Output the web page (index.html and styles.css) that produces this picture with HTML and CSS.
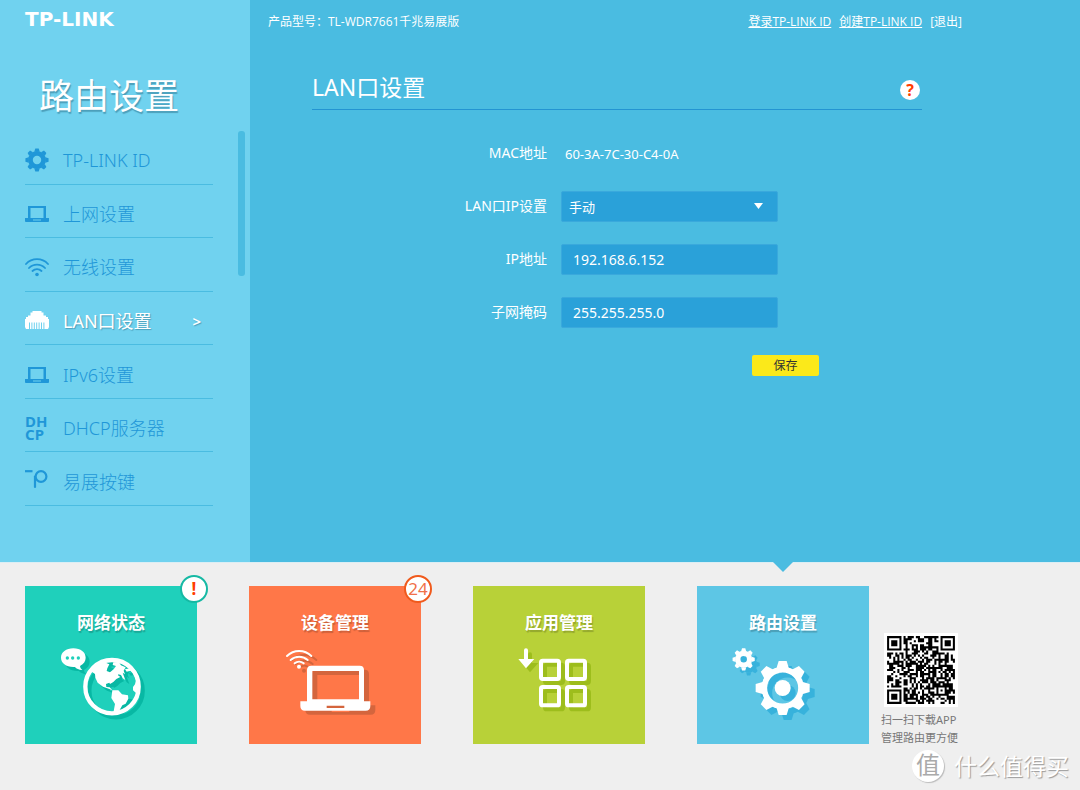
FILE: index.html
```html
<!DOCTYPE html>
<html lang="zh-CN">
<head>
<meta charset="utf-8">
<meta name="viewport" content="width=device-width, initial-scale=1">
<title>路由设置 - LAN口设置</title>
<link rel="stylesheet" href="styles.css">
</head>
<body>
<svg class="defs" aria-hidden="true">
  <defs>
    <g id="gear-teeth">
      <path id="tooth" d="M-12 -81H12L19 -58H-19Z"/>
      <use href="#tooth" transform="rotate(45)"/>
      <use href="#tooth" transform="rotate(90)"/>
      <use href="#tooth" transform="rotate(135)"/>
      <use href="#tooth" transform="rotate(180)"/>
      <use href="#tooth" transform="rotate(225)"/>
      <use href="#tooth" transform="rotate(270)"/>
      <use href="#tooth" transform="rotate(315)"/>
    </g>
    <g id="laptop">
      <path fill-rule="evenodd" d="M3 4H21V16H24V19C24 19.500 23.500 20 23 20H1C.500 20 0 19.500 0 19V16H3ZM5.500 6V16H18.500V6ZM8 17.500V18.500H16V17.500Z"/>
    </g>
  </defs>
</svg>

<div class="panel">
  <aside class="sidebar">
    <div class="logo">TP-LINK</div>
    <h1 class="sidebar-title">路由设置</h1>
    <div class="menu">
      <nav class="menu-list">
        <a class="menu-item" href="#id">
          <svg class="menu-icon" viewBox="-84 -84 168 168"><use href="#gear-teeth"/><circle r="46" fill="none" stroke="currentColor" stroke-width="33"/></svg>
          <span>TP-LINK ID</span>
        </a>
        <a class="menu-item" href="#wan">
          <svg class="menu-icon" viewBox="0 0 24 24"><use href="#laptop"/></svg>
          <span>上网设置</span>
        </a>
        <a class="menu-item" href="#wifi">
          <svg class="menu-icon" viewBox="0 0 24 24"><circle cx="12" cy="19.500" r="1.800"/><g fill="none" stroke="currentColor" stroke-width="1.800" stroke-linecap="round"><path d="M1 9A15 15 0 0 1 23 9M4 13A11 11 0 0 1 20 13M7.500 16A6.500 6.500 0 0 1 16.500 16"/></g></svg>
          <span>无线设置</span>
        </a>
        <a class="menu-item active" href="#lan">
          <svg class="menu-icon" viewBox="0 0 24 24"><path d="M7.500 2H16.500V3.500H18.500V6.500H21V8H23V10H24V18L23 20H1L0 18V10H1V8H3V6.500H5.500V3.500H7.500Z"/><path d="M4.500 13.500V20M6.900 13.500V20M9.300 13.500V20M11.700 13.500V20M14.100 13.500V20M16.500 13.500V20M18.900 13.500V20" stroke="#70d2ef" stroke-width="1"/></svg>
          <span>LAN口设置</span>
          <span class="menu-arrow">&gt;</span>
        </a>
        <a class="menu-item" href="#ipv6">
          <svg class="menu-icon" viewBox="0 0 24 24"><use href="#laptop"/></svg>
          <span>IPv6设置</span>
        </a>
        <a class="menu-item" href="#dhcp">
          <span class="menu-icon dhcp-icon">DH<br>CP</span>
          <span>DHCP服务器</span>
        </a>
        <a class="menu-item" href="#key">
          <svg class="menu-icon" viewBox="0 0 24 24"><g fill="none" stroke="currentColor" stroke-width="2.200"><path d="M0 1.200H7.500"/><path d="M10 17V6.500" stroke-linecap="round"/><circle cx="16" cy="6.500" r="5.400"/></g></svg>
          <span>易展按键</span>
        </a>
      </nav>
      <div class="scroll-thumb"></div>
    </div>
  </aside>

  <main class="content">
    <header class="topbar">
      <span>产品型号：TL-WDR7661千兆易展版</span>
      <div class="account">
        <a href="#login">登录TP-LINK ID</a>
        <a href="#register">创建TP-LINK ID</a>
        <a class="logout" href="#logout">[退出]</a>
      </div>
    </header>
    <section class="settings">
      <div class="settings-head">
        <h2>LAN口设置</h2>
        <button class="help" type="button" aria-label="帮助">?</button>
      </div>
      <form class="form">
        <span class="label">MAC地址</span>
        <span class="value">60-3A-7C-30-C4-0A</span>
        <label class="label" for="mode">LAN口IP设置</label>
        <div class="select">
          <select class="field" id="mode"><option>手动</option><option>自动</option></select>
          <svg class="caret" viewBox="0 0 9 6"><path d="M0 0H9L4.500 6Z"/></svg>
        </div>
        <label class="label" for="ip">IP地址</label>
        <input class="field" id="ip" type="text" value="192.168.6.152">
        <label class="label" for="mask">子网掩码</label>
        <input class="field" id="mask" type="text" value="255.255.255.0">
        <button class="save" type="button">保存</button>
      </form>
    </section>
  </main>
</div>

<footer class="dock">
  <a class="tile status" href="#status">
    <span class="tile-title">网络状态</span>
    <svg class="tile-icon" viewBox="0 0 172 90"><g transform="translate(-15 -70) scale(.33333)">
      <path d="M190 235C212 235 227 247 227 263C227 274 221 282 211 287Q208 293 217 300Q201 299 195 291C170 293 153 280 153 263C153 247 168 235 190 235Z"/>
      <g class="cutout"><circle cx="172" cy="264" r="5"/><circle cx="188" cy="264" r="5"/><circle cx="205" cy="264" r="5"/></g>
      <circle cx="306" cy="350" r="80" fill="none" stroke="currentColor" stroke-width="13"/>
      <path d="M243 304L264 284L284 277L298 283L292 295L290 303L300 307L311 298L318 288L308 285L310 277L326 276L333 286L347 292L341 302L345 313L338 308L346 330L338 325L333 315L325 313L324 316L331 321L319 327L310 336L300 342L298 338L288 342L289 351L299 352L307 361L298 357L279 350L263 338L256 323L255 312Z"/>
      <path d="M307 361L325 361L336 373L354 376L355 386L347 401L337 406L329 420L318 430L311 424L315 402L304 384Z"/>
      <path d="M345 298L359 295L366 303L378 318L384 337V370L378 369L369 361V351L375 343L378 330L370 310L362 302L350 305Z"/>
    </g></svg>
    <span class="badge alert">!</span>
  </a>
  <a class="tile devices" href="#devices">
    <span class="tile-title">设备管理</span>
    <svg class="tile-icon" viewBox="0 0 172 90"><g transform="translate(-9 -70) scale(.33333)">
      <circle cx="177" cy="290" r="6"/>
      <path d="M141 258A52 52 0 0 1 214 258M152 270A38 38 0 0 1 203 270M164 280A21 21 0 0 1 191 280" fill="none" stroke="currentColor" stroke-width="6" stroke-linecap="round"/>
      <path fill-rule="evenodd" d="M214 287H359Q372 287 372 300V394H391V408Q391 422 377 422H195Q181 422 181 408V394H201V300Q201 287 214 287ZM217 303V388H357V303ZM260 407V414H313V407Z"/>
    </g></svg>
    <span class="badge count">24</span>
  </a>
  <a class="tile apps" href="#apps">
    <span class="tile-title">应用管理</span>
    <svg class="tile-icon" viewBox="0 0 172 90"><g transform="translate(-13 -70) scale(.33333)">
      <path d="M192 241Q192 235 198 235Q204 235 204 241V267H223L198 295L175 267H192Z"/>
      <g fill="none" stroke="currentColor" stroke-width="12"><rect x="243" y="272" width="54" height="55" rx="5"/><rect x="321" y="272" width="54" height="55" rx="5"/><rect x="243" y="351" width="54" height="55" rx="5"/><rect x="321" y="351" width="54" height="55" rx="5"/></g>
    </g></svg>
  </a>
  <a class="tile router" href="#router">
    <span class="tile-title">路由设置</span>
    <svg class="tile-icon" viewBox="0 0 172 90"><g transform="translate(-17 -85) scale(.33333)">
      <g transform="translate(308 399)"><use href="#gear-teeth"/><circle r="55" fill="none" stroke="currentColor" stroke-width="17"/><circle r="24"/></g>
      <g transform="translate(191 313) scale(.41)"><use href="#gear-teeth"/><circle r="43" fill="none" stroke="currentColor" stroke-width="38"/></g>
    </g></svg>
  </a>
  <div class="download">
    <svg class="qr" id="qr" viewBox="-1.500 -1.500 36 36" role="img" aria-label="APP下载二维码"></svg>
    <p>扫一扫下载APP<br>管理路由更方便</p>
  </div>
  <div class="watermark"><span class="watermark-mark">值</span><span>什么值得买</span></div>
</footer>
<script src="qr.js"></script>
</body>
</html>
```
FILE: styles.css
```css
* {
  box-sizing: border-box;
}

body {
  margin: 0;
  min-height: 100vh;
  display: flex;
  flex-direction: column;
  background: #efefef;
  color: #fff;
  font-family: "Noto Sans", "Noto Sans CJK SC", sans-serif;
  font-size: 13px;
}

a {
  color: inherit;
  text-decoration: none;
}

h1,
h2,
p {
  margin: 0;
  font-weight: 400;
}

svg {
  display: block;
  fill: currentColor;
}

.defs {
  position: absolute;
  width: 0;
  height: 0;
}

.panel {
  display: flex;
  background: #4abce1;
}

.sidebar {
  flex: 0 0 250px;
  padding: 9px 5px 56px 25px;
  background: #70d2ef;
}

.logo {
  font: 700 20px/20px "DejaVu Sans", sans-serif;
}

.sidebar-title {
  padding: 42px 0 10px 14px;
  font-size: 35px;
  line-height: 50px;
  text-shadow: 1px 2px 1px #4c9fba;
}

.menu {
  display: flex;
  justify-content: space-between;
}

.menu-list {
  display: grid;
  grid-auto-rows: 1fr;
  width: 188px;
  height: 375px;
}

.menu-item {
  display: flex;
  align-items: center;
  gap: 14px;
  padding-top: 6px;
  border-bottom: 1px solid #4abce1;
  color: #1f97d8;
  font-size: 18px;
  line-height: 24px;
  font-weight: 300;
}

.menu-item.active {
  color: #fff;
  font-weight: 400;
  text-shadow: 1px 1px 1px #4c9fba;
}

.menu-icon {
  flex: none;
  width: 24px;
  height: 24px;
}

.dhcp-icon {
  height: 26px;
  font-size: 15px;
  font-weight: 700;
  line-height: 13px;
}

.menu-arrow {
  margin-left: auto;
  padding-right: 12px;
  font-size: 15px;
  font-weight: 600;
}

.scroll-thumb {
  width: 7px;
  height: 145px;
  border-radius: 3px;
  background: #4abce1;
}

.content {
  flex: 1;
}

.topbar {
  display: flex;
  justify-content: space-between;
  padding: 13px 118px 0 18px;
  font-family: "Open Sans", "Noto Sans CJK SC", sans-serif;
  font-size: 12px;
  line-height: 18px;
}

.account {
  display: flex;
  gap: 8px;
}

.account a {
  text-decoration: underline;
}

.account .logout {
  text-decoration: none;
}

.settings {
  padding: 41px 158px 0 62px;
}

.settings-head {
  display: flex;
  align-items: center;
  justify-content: space-between;
  padding: 0 2px 6px 0;
  border-bottom: 1px solid #2394d2;
}

.settings-head h2 {
  font-size: 23px;
  line-height: 31px;
}

.help {
  width: 20px;
  height: 20px;
  margin-top: 4px;
  padding: 0;
  border: 0;
  border-radius: 50%;
  background: #fff;
  color: #ff3c00;
  font: 700 16px/20px "Open Sans", sans-serif;
}

.form {
  display: grid;
  grid-template-columns: 235px 217px;
  grid-auto-rows: 31px;
  gap: 22px 14px;
  align-items: center;
  padding-top: 28px;
}

.label {
  padding-bottom: 2px;
  text-align: right;
  font-size: 14px;
  line-height: 20px;
}

.value {
  padding-left: 4px;
  font-size: 13px;
}

.select {
  position: relative;
}

.field {
  display: block;
  width: 100%;
  height: 31px;
  padding: 0 11px;
  border: 1px solid #3aa9dc;
  border-radius: 2px;
  background: #2aa1d9;
  color: #fff;
  font: inherit;
  font-size: 14px;
  appearance: none;
}

select.field {
  padding: 0 7px;
  font-size: 13px;
}

.caret {
  position: absolute;
  right: 15px;
  top: 12px;
  width: 9px;
  height: 6px;
  pointer-events: none;
}

.save {
  grid-column: 2;
  justify-self: end;
  width: 67px;
  height: 21px;
  margin-right: -41px;
  padding: 0;
  border: 0;
  border-radius: 2px;
  background: #fbe91a;
  color: #333;
  font: inherit;
  font-size: 12px;
  line-height: 21px;
}

.dock {
  position: relative;
  flex: 1;
  display: flex;
  align-items: flex-start;
  gap: 52px;
  padding: 23px 25px 46px;
  border-top: 1px solid #dceef4;
}

.tile {
  position: relative;
  flex: 0 0 172px;
  height: 158px;
  padding-top: 24px;
}

.tile-title {
  display: block;
  font-size: 17px;
  font-weight: 700;
  line-height: 26px;
  text-align: center;
  text-shadow: 1px 2px 1px #0003;
}

.tile-icon {
  width: 172px;
  height: 90px;
  margin-top: 4px;
}

.status {
  background: #1fd0bb;
}

.status .tile-icon {
  filter: drop-shadow(4px 4px 0 #08b8a4);
}

.cutout {
  fill: #1fd0bb;
}

.devices {
  background: #ff7748;
}

.devices .tile-icon {
  filter: drop-shadow(5px 4px 0 #d4653d);
}

.apps {
  background: #b8d138;
}

.apps .tile-icon {
  filter: drop-shadow(4px 4px 0 #9dbd1c);
}

.router {
  background: #5dc6e5;
}

.router .tile-icon {
  filter: drop-shadow(5px 5px 0 #37b2dc);
}

.router::before {
  content: "";
  position: absolute;
  top: -24px;
  left: 76px;
  border: 10px solid transparent;
  border-top-color: #4abce1;
  border-bottom: 0;
}

.badge {
  position: absolute;
  top: -11px;
  right: -11px;
  width: 28px;
  height: 28px;
  border: 2px solid #16b9a4;
  border-radius: 50%;
  background: #fff;
  font-size: 17px;
  line-height: 23px;
  text-align: center;
}

.alert {
  color: #ff3c00;
  font-weight: 700;
}

.count {
  border-color: #f05a1c;
  color: #f0714a;
}

.download {
  flex: none;
  margin: 47px 0 0 -40px;
  color: #777;
  font-size: 11px;
  line-height: 18px;
}

.qr {
  width: 74px;
  height: 74px;
  margin: 0 0 4px 3px;
  background: #fff;
  color: #000;
}

.watermark {
  position: absolute;
  right: 11px;
  bottom: 11px;
  display: flex;
  align-items: center;
  gap: 10px;
  color: #fff;
  font-size: 23px;
  line-height: 32px;
  text-shadow: 1px 1px 1px #999;
}

.watermark-mark {
  width: 32px;
  height: 32px;
  border-radius: 50%;
  background: #fff;
  box-shadow: 1px 1px 1px #bbb;
  color: #aaa;
  font-size: 24px;
  line-height: 30px;
  text-align: center;
  text-shadow: none;
}
```
FILE: qr.js
```js
const size = 33;
let seed = 7661;
const random = () => (seed = (seed * 16807) % 2147483647) / 2147483647;

// Returns 1 or 0 inside a finder or alignment square, -1 elsewhere.
function marker(x, y) {
  for (const [cx, cy] of [[3, 3], [29, 3], [3, 29]]) {
    const d = Math.max(Math.abs(x - cx), Math.abs(y - cy));
    if (d <= 4) return d === 4 || d === 2 ? 0 : 1;
  }
  const d = Math.max(Math.abs(x - 26), Math.abs(y - 26));
  return d <= 2 ? (d === 1 ? 0 : 1) : -1;
}

let path = "";
for (let y = 0; y < size; y++) {
  for (let x = 0; x < size; x++) {
    const noise = random() < 0.58 ? 1 : 0;
    const m = marker(x, y);
    if ((m < 0 ? noise : m) === 1) path += `M${x} ${y}h1v1h-1z`;
  }
}
document.getElementById("qr").innerHTML = `<path d="${path}"/>`;
```
